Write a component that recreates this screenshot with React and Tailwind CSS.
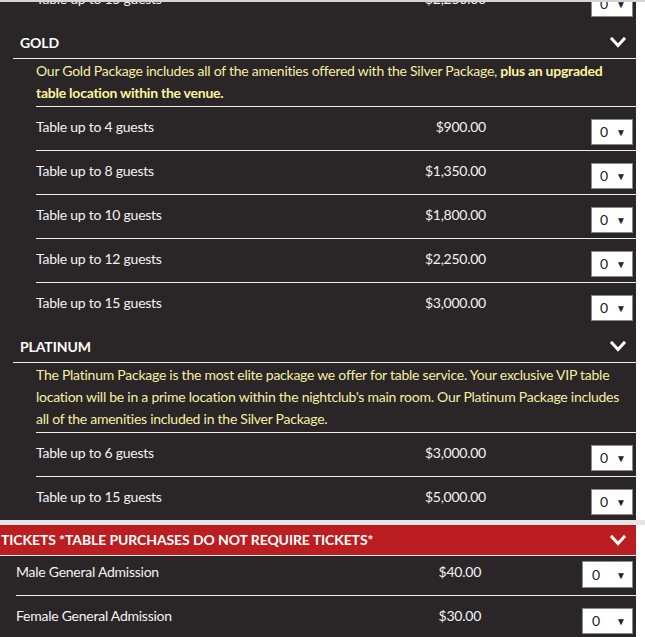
import React from "react";

const Chevron = () => (
  <svg width="16" height="11" viewBox="0 0 16 11" fill="none">
    <polyline points="2,2 8,8.5 14,2" stroke="#ffffff" strokeWidth="3" strokeLinecap="square" strokeLinejoin="miter" />
  </svg>
);

const Select = ({ wide, first }) => (
  <div
    className={
      "bg-white border border-[#8a8a8a] flex items-center justify-between text-[14px] text-[#222] " +
      (wide ? "w-[51px] pl-[9px] pr-[6px] " : "w-[42px] pl-[7px] pr-[5px] ") +
      (first ? "h-[27px] mt-[5px]" : "h-[26px] mt-[12px]")
    }
  >
    <span className="leading-none">0</span>
    <span className="text-[10px] leading-none">▼</span>
  </div>
);

const PkgRow = ({ label, price, border = true }) => (
  <div className={"ml-[36px] h-[44px] flex pr-[3px] " + (border ? "border-t border-[#ececec]" : "")}>
    <div className="w-[450px] flex justify-between pt-[10px] leading-[20px] text-[14px] tracking-[-0.25px] text-[#f3f3f3]">
      <span>{label}</span>
      <span>{price}</span>
    </div>
    <div className="ml-auto">
      <div className="bg-white border border-[#8a8a8a] flex items-center justify-between w-[42px] h-[26px] mt-[12px] pl-[8px] pr-[6px] text-[14px] text-[#222]">
        <span className="leading-none">0</span>
        <span className="text-[10px] leading-none">▼</span>
      </div>
    </div>
  </div>
);

const Header = ({ title }) => (
  <div className="ml-[13px] h-[37px] border-b border-[#ececec] pl-[7px] pr-[10px] flex items-start justify-between">
    <span className="pt-[12px] leading-[18px] text-[14px] font-bold tracking-[-0.1px] text-white">{title}</span>
    <span className="pt-[15px]"><Chevron /></span>
  </div>
);

const TicketRow = ({ label, price, first }) => (
  <div className={"ml-[16px] flex pr-[3px] " + (first ? "h-[39px]" : "h-[44px] border-t border-[#ececec]")}>
    <div className={"w-[465px] flex justify-between leading-[20px] text-[14px] tracking-[-0.25px] text-[#f3f3f3] " + (first ? "pt-[6px]" : "pt-[10px]")}>
      <span>{label}</span>
      <span>{price}</span>
    </div>
    <div className="ml-auto">
      <Select wide first={first} />
    </div>
  </div>
);

export default function App() {
  return (
    <div
      className="w-[645px] h-[637px] overflow-hidden bg-white"
      style={{ fontFamily: "Lato, 'Open Sans', sans-serif" }}
    >
      <div className="h-[2px] bg-[#d4d4d4] w-[645px] relative z-10" />
      <div className="w-[636px] bg-[#2a2527] overflow-hidden">
        <div className="mt-[-23px] h-[43px] overflow-hidden">
          <PkgRow label="Table up to 15 guests" price="$2,250.00" border={false} />
        </div>
        <Header title="GOLD" />
        <div className="ml-[36px] pr-[8px] pt-[1px] pb-[2px] leading-[22px] text-[14px] tracking-[-0.25px] text-[#f5f0a2]">
          Our Gold Package includes all of the amenities offered with the Silver Package,{" "}
          <b className="text-[#fbf59f]">plus an upgraded table location within the venue.</b>
        </div>
        <PkgRow label="Table up to 4 guests" price="$900.00" />
        <PkgRow label="Table up to 8 guests" price="$1,350.00" />
        <PkgRow label="Table up to 10 guests" price="$1,800.00" />
        <PkgRow label="Table up to 12 guests" price="$2,250.00" />
        <PkgRow label="Table up to 15 guests" price="$3,000.00" />
        <Header title="PLATINUM" />
        <div className="ml-[36px] pr-[8px] pt-[1px] pb-[2px] leading-[22px] text-[14px] tracking-[-0.25px] text-[#f5f0a2]">
          The Platinum Package is the most elite package we offer for table service. Your exclusive VIP table location will be in a prime location within the nightclub's main room. Our Platinum Package includes all of the amenities included in the Silver Package.
        </div>
        <PkgRow label="Table up to 6 guests" price="$3,000.00" />
        <PkgRow label="Table up to 15 guests" price="$5,000.00" />
      </div>
      <div className="h-[5px] bg-[#e6e6e6]" />
      <div className="w-[636px] h-[30px] bg-[#bb1d21] flex items-center justify-between pr-[10px]">
        <span className="pl-[1px] text-[14px] font-bold tracking-[-0.1px] text-white leading-[18px]">
          TICKETS *TABLE PURCHASES DO NOT REQUIRE TICKETS*
        </span>
        <Chevron />
      </div>
      <div className="w-[636px] h-[1px] bg-[#ececec]" />
      <div className="w-[636px] bg-[#2a2527] h-[200px]">
        <TicketRow label="Male General Admission" price="$40.00" first />
        <TicketRow label="Female General Admission" price="$30.00" />
      </div>
    </div>
  );
}
